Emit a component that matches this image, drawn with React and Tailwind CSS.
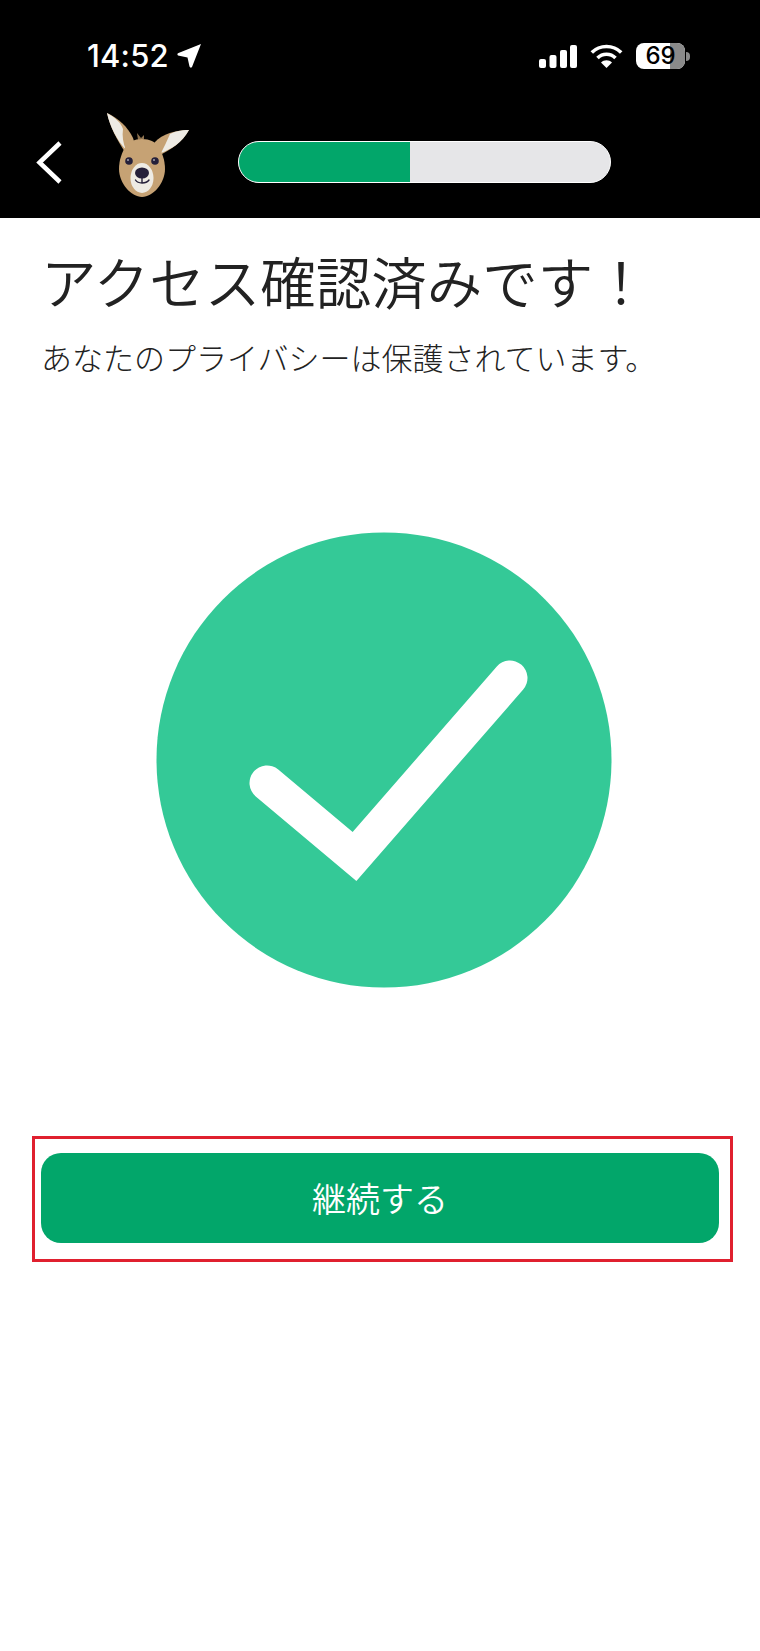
import React from "react";

function Kangaroo() {
  return (
    <svg width="110" height="105" viewBox="0 0 110 105" className="shrink-0">
      <path d="M17 13 C28 18 38 27 43 38 L46 48 L35 52 C27 40 20 27 17 13Z" fill="#c6a274" />
      <path d="M17 13 C26 18 31 23 33 29 C32 36 33 43 36 50 C27 40 20 27 17 13Z" fill="#eeebe4" />
      <path d="M99 30 C86 30 72 34 65 42 L59 50 L70 55 C80 50 92 43 99 30Z" fill="#c6a274" />
      <path d="M99 30 C90 30 84 32 80 34 C77 41 74 47 71 53 C81 49 92 43 99 30Z" fill="#eeebe4" />
      <path d="M48 40 L47 33 L51 38 L54 35 L54 39 Z" fill="#8f7350" />
      <path d="M52 39 C60 39 65 42 68 46 C72 52 75 60 75 69 C75 83 63 97 52 97 C41 97 29 83 29 69 C29 60 32 52 36 46 C39 42 44 39 52 39Z" fill="#c6a274" />
      <ellipse cx="52" cy="78" rx="11.500" ry="15" fill="#eeebe4" />
      <circle cx="39" cy="61" r="3.800" fill="#25203a" />
      <circle cx="65" cy="61" r="3.800" fill="#25203a" />
      <circle cx="38" cy="60" r="0.800" fill="#fff" />
      <circle cx="64" cy="60" r="0.800" fill="#fff" />
      <ellipse cx="52" cy="73" rx="7" ry="5.500" fill="#25203a" />
      <path d="M52 76 V83 M45.500 80 C48 84 56 84 59 80" stroke="#25203a" strokeWidth="1.400" fill="none" strokeLinecap="round" />
    </svg>
  );
}

export default function App() {
  return (
    <div className="w-[760px] h-[1651px] bg-white flex flex-col font-['Noto_Sans_CJK_JP',sans-serif] text-[#222222]">
      <header className="h-[218px] bg-black flex flex-col">
        <div className="h-[100px] flex items-start justify-between pt-[38px] pl-[87px] pr-[70px]">
          <div className="flex items-center gap-[8px]">
            <span className="font-['Inter',sans-serif] text-[31px] leading-[36px] font-medium text-white tracking-[0.2px]">14:52</span>
            <svg width="24" height="24" viewBox="0 0 24 24">
              <path d="M24 0 L15 23 Q13.500 24.500 12.500 22.500 L10.500 13.500 L1 11.500 Q-0.500 10 1.500 9 Z" fill="#fff" />
            </svg>
          </div>
          <div className="flex items-center h-[36px]">
            <svg width="38" height="23" viewBox="0 0 38 23" className="mr-[13px]" fill="#fff">
              <rect x="0" y="14" width="7" height="9" rx="2" />
              <rect x="10.500" y="10" width="7" height="13" rx="2" />
              <rect x="21" y="5" width="7" height="18" rx="2" />
              <rect x="31" y="0" width="7" height="23" rx="2" />
            </svg>
            <svg width="33" height="24" viewBox="0 0 33 24" className="mr-[13px]" fill="none" stroke="#fff" strokeWidth="3.600">
              <path d="M1.800 8.500 C10 0.500 23 0.500 31.200 8.500" />
              <path d="M7.500 14 C12.500 9 20.500 9 25.500 14" />
              <path d="M16.500 24 L11 18.500 C14 15.500 19 15.500 22 18.500 Z" fill="#fff" stroke="none" />
            </svg>
            <div className="relative w-[49px] h-[26px] rounded-[8px] bg-white flex items-center justify-center">
              <div className="absolute right-0 top-0 bottom-0 w-[15px] rounded-r-[8px] bg-[#8a8a8a]" />
              <span className="relative font-['Inter',sans-serif] text-[24px] leading-[26px] font-medium text-black">69</span>
            </div>
            <div className="w-[4px] h-[9px] ml-[1px] rounded-r-full bg-[#8a8a8a]" />
          </div>
        </div>
        <div className="flex items-start h-[118px]">
          <svg width="26" height="44" viewBox="0 0 26 44" className="ml-[36px] mt-[41px]" fill="none" stroke="#fff" strokeWidth="4.500">
            <path d="M24 2 L3.500 21.500 L24 41" />
          </svg>
          <div className="ml-[28px]">
            <Kangaroo />
          </div>
          <div className="ml-[38px] mt-[41px] w-[373px] h-[42px] rounded-full border-[1.500px] border-white bg-[#e6e6e8] overflow-hidden">
            <div className="w-[171px] h-full bg-[#02a66a]" />
          </div>
        </div>
      </header>

      <main className="flex flex-col">
        <h1 className="ml-[41px] mt-[23px] text-[55.500px] leading-[78px] font-[350] whitespace-nowrap">アクセス確認済みです！</h1>
        <p className="ml-[41px] mt-[16px] text-[31px] leading-[44px] font-light whitespace-nowrap">あなたのプライバシーは保護されています。</p>
        <div className="mt-[153px] ml-[156px]">
          <svg width="456" height="456" viewBox="156 531 456 456">
            <circle cx="384" cy="759" r="227.500" fill="#34c997" />
            <path d="M267 782 L354.500 855.500 L510 677" fill="none" stroke="#fff" strokeWidth="35" strokeLinecap="round" strokeLinejoin="miter" strokeMiterlimit="10" />
          </svg>
        </div>
        <div className="mt-[148px] ml-[32px] w-[701px] h-[126px] border-[3px] border-[#e0202f] pt-[14px] pl-[6px]">
          <button className="w-[678px] h-[90px] rounded-[20px] bg-[#02a66a] text-white text-[34px] font-[350] flex items-center justify-center pb-[2px]">継続する</button>
        </div>
      </main>
    </div>
  );
}
